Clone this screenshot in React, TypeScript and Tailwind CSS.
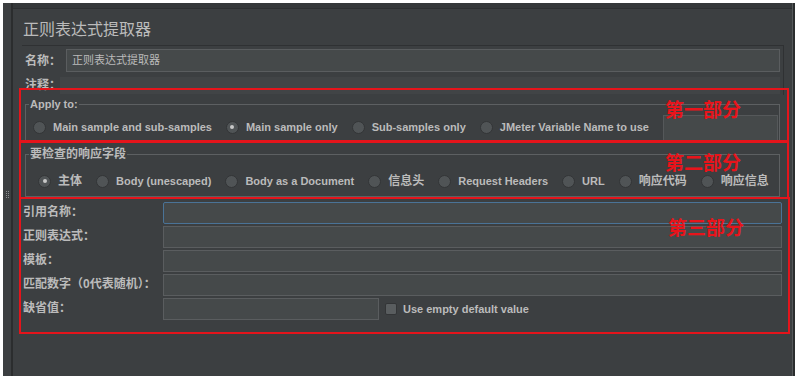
import type { ReactNode } from 'react';

const FONT = '"Liberation Sans", "Noto Sans CJK SC", sans-serif';

function Radio({ checked = false }: { checked?: boolean }) {
  return (
    <span className="flex h-[13px] w-[13px] shrink-0 items-center justify-center rounded-full border border-[#333537] bg-[#505456]">
      {checked && <span className="h-[4px] w-[4px] rounded-full bg-[#c8c8c8]" />}
    </span>
  );
}

function Option({ label, checked, cjk }: { label: string; checked?: boolean; cjk?: boolean }) {
  return (
    <div className="flex items-center gap-[7px] whitespace-nowrap">
      <Radio checked={checked} />
      <span className={cjk ? 'text-[12px]' : 'text-[11px]'}>{label}</span>
    </div>
  );
}

function Field({ label, children }: { label: string; children: ReactNode }) {
  return (
    <div className="flex h-[24px] items-start">
      <span className="w-[140px] shrink-0 whitespace-nowrap pt-[1px] text-[12px] font-bold leading-[18px]">{label}</span>
      {children}
    </div>
  );
}

const inputCls = 'h-[22px] border border-[#5a5d5f] bg-[#45494a]';

export default function App() {
  return (
    <div className="h-[381px] w-[797px] bg-white pl-[3px] pt-[3px]" style={{ fontFamily: FONT }}>
      <div className="relative flex h-[373px] w-[792px] bg-[#3c3f41] text-[#bbbbbb]">
        {/* splitter */}
        <div className="flex w-[8px] flex-col items-center justify-center pt-[10px]">
          <div className="flex flex-col gap-[1px]">
            {[0, 1, 2, 3].map((i) => (
              <div key={i} className="flex gap-[1px]">
                <span className="h-[1px] w-[1px] bg-[#8a8d8f]" />
                <span className="h-[1px] w-[1px] bg-[#8a8d8f]" />
              </div>
            ))}
          </div>
        </div>
        <div className="w-[2px] bg-[#2b2d2e]" />

        <div className="flex flex-1 flex-col">
          <div className="h-[6px] border-b border-[#2e3032] bg-[#35383a]" />

          <div className="pl-[10px] pt-[11px] pb-[5px] text-[16px] leading-[20px]">正则表达式提取器</div>

          {/* name / comment */}
          <div className="ml-[9px] mr-[8px] border-r border-t border-[#2f3133] px-[3px] pt-[3px] font-bold">
            <div className="flex items-center">
              <span className="w-[41px] shrink-0 whitespace-nowrap text-[12px]">名称：</span>
              <div className="flex h-[23px] flex-1 items-center border border-[#5a5d5f] bg-[#45494a] pl-[5px] text-[11px] font-normal">
                正则表达式提取器
              </div>
            </div>
            <div className="mt-[3px] flex h-[20px] items-center">
              <span className="w-[35px] shrink-0 whitespace-nowrap text-[12px]">注释：</span>
              <div className="h-[17px] flex-1 bg-[#414446]" />
            </div>
          </div>

          {/* apply to */}
          <fieldset className="mx-[12px] mt-[3px] border border-[#5d6062] pl-[7px] font-bold">
            <legend className="-ml-[4px] px-[1px] text-[11px] leading-[12px]">Apply to:</legend>
            <div className="flex items-center">
              <div className="mt-[2px] flex items-center gap-[14px]">
                <Option label="Main sample and sub-samples" />
                <Option label="Main sample only" checked />
                <Option label="Sub-samples only" />
                <Option label="JMeter Variable Name to use" />
              </div>
              <div className="ml-[14px] mt-[5px] h-[27px] w-[115px] border border-[#55585a] bg-[#45494a]" />
            </div>
          </fieldset>

          {/* response field */}
          <fieldset className="mx-[12px] mt-[5px] border border-[#5d6062] pb-[5px] pl-[12px] pt-[11px] font-bold">
            <legend className="-ml-[9px] px-[1px] text-[12px] leading-[12px]">要检查的响应字段</legend>
            <div className="flex h-[20px] items-center gap-[14px]">
              <Option label="主体" checked cjk />
              <Option label="Body (unescaped)" />
              <Option label="Body as a Document" />
              <Option label="信息头" cjk />
              <Option label="Request Headers" />
              <Option label="URL" />
              <Option label="响应代码" cjk />
              <Option label="响应信息" cjk />
            </div>
          </fieldset>

          {/* extractor fields */}
          <div className="mt-[5px] flex flex-col pl-[10px] pr-[10px]">
            <Field label="引用名称：">
              <div className="h-[22px] flex-1 rounded-[2px] border border-[#4a7397] bg-[#45494a]" />
            </Field>
            <Field label="正则表达式：">
              <div className={`${inputCls} flex-1`} />
            </Field>
            <Field label="模板：">
              <div className={`${inputCls} flex-1`} />
            </Field>
            <Field label="匹配数字（0代表随机）：">
              <div className={`${inputCls} flex-1`} />
            </Field>
            <Field label="缺省值：">
              <div className="flex items-center">
                <div className={`${inputCls} w-[216px]`} />
                <span className="ml-[6px] h-[12px] w-[12px] rounded-[2px] border border-[#333537] bg-[#595d5f]" />
                <span className="ml-[6px] text-[11px] font-bold">Use empty default value</span>
              </div>
            </Field>
          </div>
        </div>

        <div className="w-[1px] bg-[#55585a]" />
        <div className="w-[2px] bg-[#2b2d2e]" />

        {/* annotation boxes */}
        <div className="absolute left-[16px] top-[85px] h-[54px] w-[770px] border-2 border-[#e5141b]" />
        <div className="absolute left-[16px] top-[138px] h-[58px] w-[770px] border-2 border-[#e5141b]" />
        <div className="absolute left-[16px] top-[194px] h-[137px] w-[771px] border-2 border-[#e5141b]" />
        <span className="absolute left-[662px] top-[98px] text-[19px] font-bold leading-none text-[#e8141b]">第一部分</span>
        <span className="absolute left-[662px] top-[151px] text-[19px] font-bold leading-none text-[#e8141b]">第二部分</span>
        <span className="absolute left-[665px] top-[216px] text-[19px] font-bold leading-none text-[#e8141b]">第三部分</span>
      </div>
    </div>
  );
}
